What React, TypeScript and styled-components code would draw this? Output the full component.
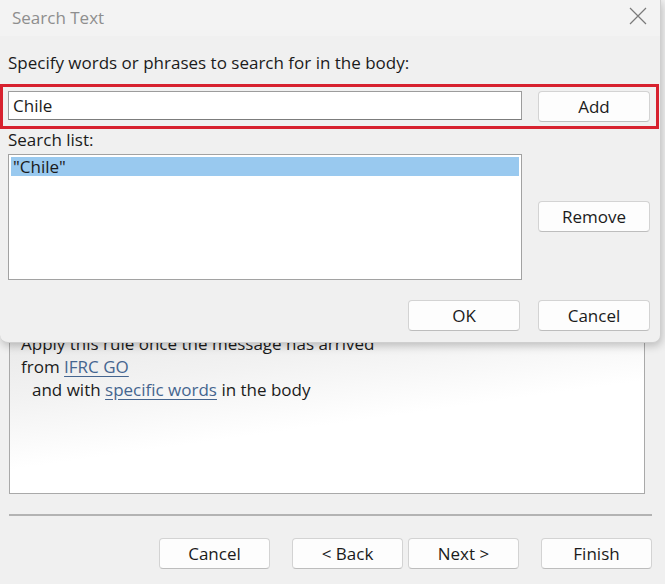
import React from 'react';
import styled, {createGlobalStyle} from "styled-components";

const GlobalStyle = createGlobalStyle`
  html, body {
    margin: 0;
    padding: 0;
  }
  body {
    font-family: "Open Sans", "Liberation Sans", sans-serif;
    font-size: 17px;
    color: #1b1b1b;
    background: #f0f0f0;
  }
`

type ButtonType = {
    w?: number
}

export default function App() {
    return (
        <Screen>
            <GlobalStyle/>
            <RuleWindow>
                <RulePanel>
                    <RuleLine>Apply this rule once the message has arrived</RuleLine>
                    <RuleLine>from <LinkText>IFRC GO</LinkText></RuleLine>
                    <RuleLine indent>and with <LinkText>specific words</LinkText> in the body</RuleLine>
                </RulePanel>
                <Separator/>
                <WizardButtons>
                    <WinButton w={111}>Cancel</WinButton>
                    <BackNextGroup>
                        <WinButton w={111}>&lt; Back</WinButton>
                        <WinButton w={111}>Next &gt;</WinButton>
                    </BackNextGroup>
                    <WinButton w={111}>Finish</WinButton>
                </WizardButtons>
            </RuleWindow>

            <Dialog>
                <TitleBar>
                    <Title>Search Text</Title>
                    <CloseIcon width="18" height="18" viewBox="0 0 18 18">
                        <path d="M1 1 L17 17 M17 1 L1 17" stroke="#7a7a7a" strokeWidth="1.2" fill="none"/>
                    </CloseIcon>
                </TitleBar>
                <DialogBody>
                    <Label>Specify words or phrases to search for in the body:</Label>
                    <Highlight>
                        <TextInput>Chile</TextInput>
                        <WinButton>Add</WinButton>
                    </Highlight>
                    <Label small>Search list:</Label>
                    <ListRow>
                        <ListBox>
                            <ListItem selected>"Chile"</ListItem>
                        </ListBox>
                        <SideColumn>
                            <WinButton>Remove</WinButton>
                        </SideColumn>
                    </ListRow>
                    <DialogFooter>
                        <WinButton>OK</WinButton>
                        <WinButton>Cancel</WinButton>
                    </DialogFooter>
                </DialogBody>
            </Dialog>
        </Screen>
    );
}

const Screen = styled.div`
  position: relative;
  width: 665px;
  height: 584px;
  overflow: hidden;
  background: #f0f0f0;
`

const RuleWindow = styled.div`
  display: flex;
  flex-direction: column;
  padding: 300px 13px 0 9px;
`

const RulePanel = styled.div`
  height: 194px;
  box-sizing: border-box;
  margin-right: 7px;
  border: 1px solid #a9a9a9;
  padding: 31px 0 0 11px;
  background: linear-gradient(172deg, #e4e4e4 0%, #f2f2f2 35%, #ffffff 60%, #ffffff 100%);
`

const RuleLine = styled.div<{ indent?: boolean }>`
  height: 23px;
  line-height: 23px;
  padding-left: ${props => props.indent ? '11px' : '0'};
  white-space: nowrap;
`

const LinkText = styled.span`
  color: #45658f;
  text-decoration: underline;
  text-underline-offset: 3px;
`

const Separator = styled.div`
  height: 2px;
  margin: 20px 0 0 0;
  background: #b3b3b3;
`

const WizardButtons = styled.div`
  display: flex;
  justify-content: flex-end;
  gap: 22px;
  margin-top: 22px;
`

const BackNextGroup = styled.div`
  display: flex;
  gap: 5px;
`

const WinButton = styled.button<ButtonType>`
  width: ${props => props.w ? props.w + 'px' : '112px'};
  height: 31px;
  box-sizing: border-box;
  border: 1px solid #d3d3d3;
  border-bottom-color: #bdbdbd;
  border-radius: 4px;
  background: #fdfdfd;
  font-family: inherit;
  font-size: 17px;
  color: #1b1b1b;
  padding: 0;
`

const Dialog = styled.div`
  position: absolute;
  left: 0;
  top: 0;
  width: 661px;
  height: 343px;
  box-sizing: border-box;
  background: #f0f0f0;
  border-right: 1px solid #cfcfcf;
  border-bottom: 1px solid #cfcfcf;
  border-radius: 0 0 8px 8px;
  box-shadow: 1px 3px 8px rgba(0, 0, 0, 0.22);
  display: flex;
  flex-direction: column;
`

const TitleBar = styled.div`
  height: 36px;
  box-sizing: border-box;
  display: flex;
  align-items: center;
  justify-content: space-between;
  padding: 0 13px 2px 12px;
  background: #f3f3f3;
`

const Title = styled.span`
  font-size: 17px;
  color: #8e8e8e;
`

const CloseIcon = styled.svg`
  margin-top: -2px;
`

const DialogBody = styled.div`
  display: flex;
  flex-direction: column;
  padding: 17px 0 0 0;
`

const Label = styled.div<{ small?: boolean }>`
  height: 20px;
  line-height: 20px;
  padding-left: 8px;
  margin-bottom: ${props => props.small ? '4px' : '11px'};
`

const Highlight = styled.div`
  display: flex;
  gap: 16px;
  align-items: flex-start;
  width: 659px;
  height: 45px;
  box-sizing: border-box;
  border: 3px solid #d7212e;
  padding: 4px 6px 5px 5px;
  margin-bottom: 1px;
`

const TextInput = styled.div`
  width: 514px;
  height: 29px;
  box-sizing: border-box;
  border: 1px solid #9c9c9c;
  border-bottom-color: #7c7c7c;
  background: #ffffff;
  line-height: 27px;
  padding-left: 4px;
`

const ListRow = styled.div`
  display: flex;
  gap: 16px;
  padding-left: 8px;
`

const ListBox = styled.div`
  width: 514px;
  height: 126px;
  box-sizing: border-box;
  border: 1px solid #a2a2a2;
  background: #ffffff;
  padding: 2px 2px;
`

const ListItem = styled.div<{ selected?: boolean }>`
  height: 19px;
  line-height: 19px;
  padding-left: 2px;
  background: ${props => props.selected ? '#99c9ef' : 'transparent'};
`

const SideColumn = styled.div`
  display: flex;
  flex-direction: column;
  padding-top: 47px;
`

const DialogFooter = styled.div`
  display: flex;
  justify-content: flex-end;
  gap: 18px;
  padding: 20px 10px 0 0;
`
